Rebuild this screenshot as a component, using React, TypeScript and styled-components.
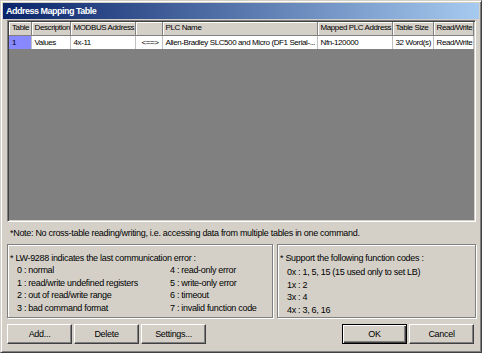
import React from "react";
import styled, { createGlobalStyle, css } from "styled-components";

const GlobalStyle = createGlobalStyle`
  html, body {
    margin: 0;
    padding: 0;
    background: #d4d0c8;
  }
  body {
    font-family: "Liberation Sans", Arial, sans-serif;
    font-size: 9px;
    letter-spacing: -0.3px;
    color: #000;
  }
`;

const raised = css`
  border-style: solid;
  border-width: 1px;
  border-color: #ffffff #404040 #404040 #ffffff;
  box-shadow: inset -1px -1px 0 #808080;
`;

const Window = styled.div`
  box-sizing: border-box;
  width: 482px;
  height: 353px;
  border-style: solid;
  border-width: 1px;
  border-color: #d4d0c8 #404040 #404040 #d4d0c8;
  box-shadow: inset 1px 1px 0 #ffffff, inset -1px -1px 0 #808080;
  padding: 2px;
  display: flex;
  flex-direction: column;
`;

const TitleBar = styled.div`
  height: 16px;
  display: flex;
  align-items: center;
  padding-left: 3px;
  background: linear-gradient(to right, #0a246a, #a6caf0);
  color: #ffffff;
  font-weight: bold;
  letter-spacing: -0.5px;
`;

const Body = styled.div`
  flex: 1;
  display: flex;
  flex-direction: column;
  padding: 0 3px 0 4px;
`;

const TableFrame = styled.div`
  box-sizing: border-box;
  margin-top: 1px;
  height: 202px;
  border-style: solid;
  border-width: 1px;
  border-color: #808080 #ffffff #ffffff #808080;
  box-shadow: inset 1px 1px 0 #404040, inset -1px -1px 0 #d4d0c8;
  padding: 1px;
  background: #808080;
  overflow: hidden;
`;

const Grid = styled.table`
  border-collapse: collapse;
  table-layout: fixed;
  width: 464px;
  font-size: 8px;
  letter-spacing: -0.4px;
`;

const HeadCell = styled.th`
  box-sizing: border-box;
  height: 13px;
  line-height: 12px;
  padding: 0 0 0 3px;
  background: #d4d0c8;
  font-weight: normal;
  text-align: left;
  white-space: nowrap;
  overflow: hidden;
  border-right: 1px solid #808080;
  border-bottom: 1px solid #808080;
  box-shadow: inset 1px 1px 0 #ffffff;
`;

const Cell = styled.td<{ $selected?: boolean; $center?: boolean }>`
  box-sizing: border-box;
  height: 14px;
  line-height: 13px;
  padding: 0 0 0 3px;
  background: ${(p) => (p.$selected ? "#8888ff" : "#ffffff")};
  text-align: ${(p) => (p.$center ? "center" : "left")};
  white-space: nowrap;
  overflow: hidden;
  border-right: 1px solid #c0c0c0;
`;

const Note = styled.div`
  height: 22px;
  display: flex;
  align-items: center;
  padding-left: 3px;
`;

const GroupRow = styled.div`
  display: flex;
  gap: 4px;
  height: 74px;
`;

const GroupBox = styled.div<{ $width?: number }>`
  box-sizing: border-box;
  ${(p) => (p.$width ? `width: ${p.$width}px;` : "flex: 1;")}
  border: 1px solid #808080;
  box-shadow: inset 1px 1px 0 #ffffff, 1px 1px 0 #ffffff;
  padding: 8px 0 0 2px;
`;

const GroupTitle = styled.div`
  height: 11px;
  line-height: 11px;
`;

const ErrorList = styled.div`
  display: grid;
  grid-template-columns: 153px 1fr;
  grid-auto-rows: 12.5px;
  align-items: center;
  padding-left: 7px;
`;

const CodeList = styled.div`
  display: grid;
  grid-auto-rows: 12.5px;
  align-items: center;
  padding: 2px 0 0 7px;
`;

const ButtonRow = styled.div`
  display: flex;
  gap: 2px;
  margin-top: 6px;
  padding-right: 2px;
`;

const Spacer = styled.div`
  flex: 1;
`;

const Button = styled.button<{ $default?: boolean }>`
  box-sizing: border-box;
  width: 65px;
  height: 20px;
  padding: 0;
  background: #d4d0c8;
  font-family: inherit;
  font-size: 9px;
  letter-spacing: -0.3px;
  color: #000;
  ${raised}
  ${(p) =>
    p.$default &&
    css`
      border: 1px solid #000000;
      box-shadow: inset 1px 1px 0 #ffffff, inset -1px -1px 0 #404040,
        inset -2px -2px 0 #808080;
    `}
`;

const columns = [22, 39, 65, 27, 155, 75, 41, 40];
const headers = [
  "Table",
  "Description",
  "MODBUS Address",
  "",
  "PLC Name",
  "Mapped PLC Address",
  "Table Size",
  "Read/Write",
];

const errors = [
  ["0 : normal", "4 : read-only error"],
  ["1 : read/write undefined registers", "5 : write-only error"],
  ["2 : out of read/write range", "6 : timeout"],
  ["3 : bad command format", "7 : invalid function code"],
];

const codes = [
  "0x : 1, 5, 15 (15 used only to set LB)",
  "1x : 2",
  "3x : 4",
  "4x : 3, 6, 16",
];

export default function App() {
  return (
    <>
      <GlobalStyle />
      <Window>
        <TitleBar>Address Mapping Table</TitleBar>
        <Body>
          <TableFrame>
            <Grid>
              <colgroup>
                {columns.map((w, i) => (
                  <col key={i} style={{ width: w }} />
                ))}
              </colgroup>
              <thead>
                <tr>
                  {headers.map((h, i) => (
                    <HeadCell key={i}>{h}</HeadCell>
                  ))}
                </tr>
              </thead>
              <tbody>
                <tr>
                  <Cell $selected>1</Cell>
                  <Cell>Values</Cell>
                  <Cell>4x-11</Cell>
                  <Cell $center>&lt;==&gt;</Cell>
                  <Cell>Allen-Bradley SLC500 and Micro (DF1 Serial-...</Cell>
                  <Cell>Nfn-120000</Cell>
                  <Cell>32 Word(s)</Cell>
                  <Cell>Read/Write</Cell>
                </tr>
              </tbody>
            </Grid>
          </TableFrame>
          <Note>
            *Note: No cross-table reading/writing, i.e. accessing data from multiple tables in one command.
          </Note>
          <GroupRow>
            <GroupBox $width={266}>
              <GroupTitle>* LW-9288 indicates the last communication error :</GroupTitle>
              <ErrorList>
                {errors.flat().map((e) => (
                  <span key={e}>{e}</span>
                ))}
              </ErrorList>
            </GroupBox>
            <GroupBox>
              <GroupTitle>* Support the following function codes :</GroupTitle>
              <CodeList>
                {codes.map((c) => (
                  <span key={c}>{c}</span>
                ))}
              </CodeList>
            </GroupBox>
          </GroupRow>
          <ButtonRow>
            <Button>Add...</Button>
            <Button>Delete</Button>
            <Button>Settings...</Button>
            <Spacer />
            <Button $default>OK</Button>
            <Button>Cancel</Button>
          </ButtonRow>
        </Body>
      </Window>
    </>
  );
}
